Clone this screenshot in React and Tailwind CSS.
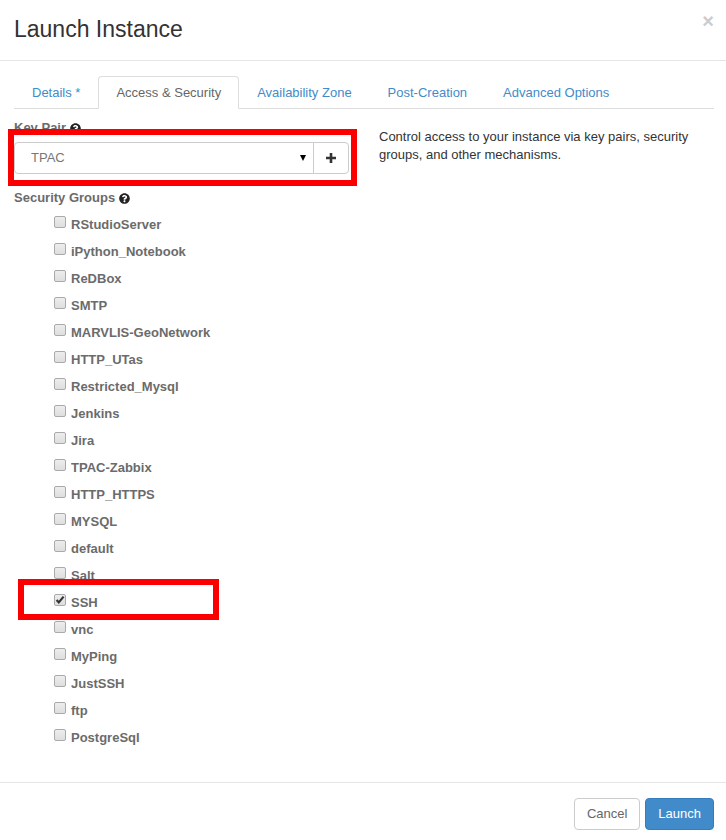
import { useState } from "react";
import { FaQuestionCircle } from "react-icons/fa";

const tabs = ["Details *", "Access & Security", "Availability Zone", "Post-Creation", "Advanced Options"];

const groups = [
  "RStudioServer", "iPython_Notebook", "ReDBox", "SMTP", "MARVLIS-GeoNetwork",
  "HTTP_UTas", "Restricted_Mysql", "Jenkins", "Jira", "TPAC-Zabbix",
  "HTTP_HTTPS", "MYSQL", "default", "Salt", "SSH", "vnc", "MyPing",
  "JustSSH", "ftp", "PostgreSql",
];

function Tab({ label, active }) {
  return (
    <li className="-mb-px flex">
      <a
        href="#"
        aria-current={active ? "page" : undefined}
        className={
          active
            ? "rounded-t border border-[#ddd] border-b-white bg-white px-[17px] pt-[7px] pb-[6px] text-[#666]"
            : "border border-transparent px-[17px] pt-[7px] pb-[6px] text-[#428bca]"
        }
      >
        {label}
      </a>
    </li>
  );
}

function GroupRow({ name, highlighted }) {
  const [checked, setChecked] = useState(name === "SSH");
  return (
    <li className="relative h-[27px]">
      <label className="flex items-start gap-[5px] pl-10 font-bold">
        <span className="relative mt-1 h-3 w-3">
          <input
            type="checkbox"
            checked={checked}
            onChange={(e) => setChecked(e.target.checked)}
            className="block h-3 w-3 appearance-none rounded-xs border border-[#aaa] bg-linear-to-b from-[#ededed] to-[#dedede]"
          />
          {checked && (
            <svg viewBox="0 0 12 12" className="pointer-events-none absolute inset-0 h-3 w-3" aria-hidden="true">
              <path d="M2.6 6 L4.8 8.4 L9.6 2.6" fill="none" stroke="#333" strokeWidth="2.2" />
            </svg>
          )}
        </span>
        <span className="mt-1 leading-[18px]">{name}</span>
      </label>
      {highlighted && (
        <div className="pointer-events-none absolute -top-[11px] left-1 z-10 h-[41px] w-[201px] border-6 border-[#fb0000]" />
      )}
    </li>
  );
}

export default function App() {
  return (
    <div className="bg-white font-['Liberation_Sans',Arial,sans-serif] text-[13px] leading-[18px] text-[#333]">
      <header className="flex items-start justify-between border-b border-[#e5e5e5] pt-4 pr-3 pb-[18px] pl-[14px]">
        <h1 className="text-[23px] leading-[26px]">Launch Instance</h1>
        <button type="button" aria-label="Close" className="-mt-1 text-[20px] leading-[18px] font-bold text-[#ccc]">
          ×
        </button>
      </header>

      <main className="pt-[15px] pr-3 pl-[14px]">
        <nav>
          <ul className="flex border-b border-[#ddd]">
            {tabs.map((t, i) => (
              <Tab key={t} label={t} active={i === 1} />
            ))}
          </ul>
        </nav>

        <div className="grid grid-cols-2 gap-[30px]">
          <section className="pt-[10px] text-[#6b6b6b]">
            <div className="flex items-center gap-1 font-bold">
              <label htmlFor="keypair">Key Pair</label>
              <FaQuestionCircle className="h-[11px] w-[11px] text-[#222]" />
            </div>
            <div className="relative mt-[5px] flex h-8">
              <div className="relative flex-1">
                <select
                  id="keypair"
                  className="h-8 w-full appearance-none rounded-l border border-[#ccc] bg-white px-4 text-[13px] text-[#777]"
                >
                  <option>TPAC</option>
                </select>
                <svg viewBox="0 0 6 6" className="pointer-events-none absolute top-[13px] right-2 h-[6px] w-[6px]" aria-hidden="true">
                  <path d="M0 0H6L3 6Z" fill="#000" />
                </svg>
              </div>
              <button
                type="button"
                aria-label="Add key pair"
                className="-ml-px flex w-9 items-center justify-center rounded-r border border-[#ccc] bg-white"
              >
                <svg viewBox="0 0 10 10" className="h-[10px] w-[10px]" aria-hidden="true">
                  <path d="M0 5H10M5 0V10" stroke="#333" strokeWidth="2.6" />
                </svg>
              </button>
              <div className="pointer-events-none absolute -top-[13px] -right-2 -bottom-3 -left-[6px] border-6 border-[#fb0000]" />
            </div>

            <fieldset className="mt-[15px]">
              <legend className="flex items-center gap-1 font-bold">
                Security Groups
                <FaQuestionCircle className="h-[11px] w-[11px] text-[#222]" />
              </legend>
              <ul className="mt-[5px]">
                {groups.map((g) => (
                  <GroupRow key={g} name={g} highlighted={g === "SSH"} />
                ))}
              </ul>
            </fieldset>
          </section>

          <section className="pt-[19px]">
            <p>Control access to your instance via key pairs, security groups, and other mechanisms.</p>
          </section>
        </div>
      </main>

      <footer className="mt-[30px] flex justify-end gap-[5px] border-t border-[#e5e5e5] pt-[15px] pr-3 pb-[10px]">
        <button type="button" className="h-8 rounded border border-[#ccc] bg-white px-3 text-[#666]">
          Cancel
        </button>
        <button type="button" className="h-8 rounded border border-[#357ebd] bg-[#428bca] px-3 text-white">
          Launch
        </button>
      </footer>
    </div>
  );
}
